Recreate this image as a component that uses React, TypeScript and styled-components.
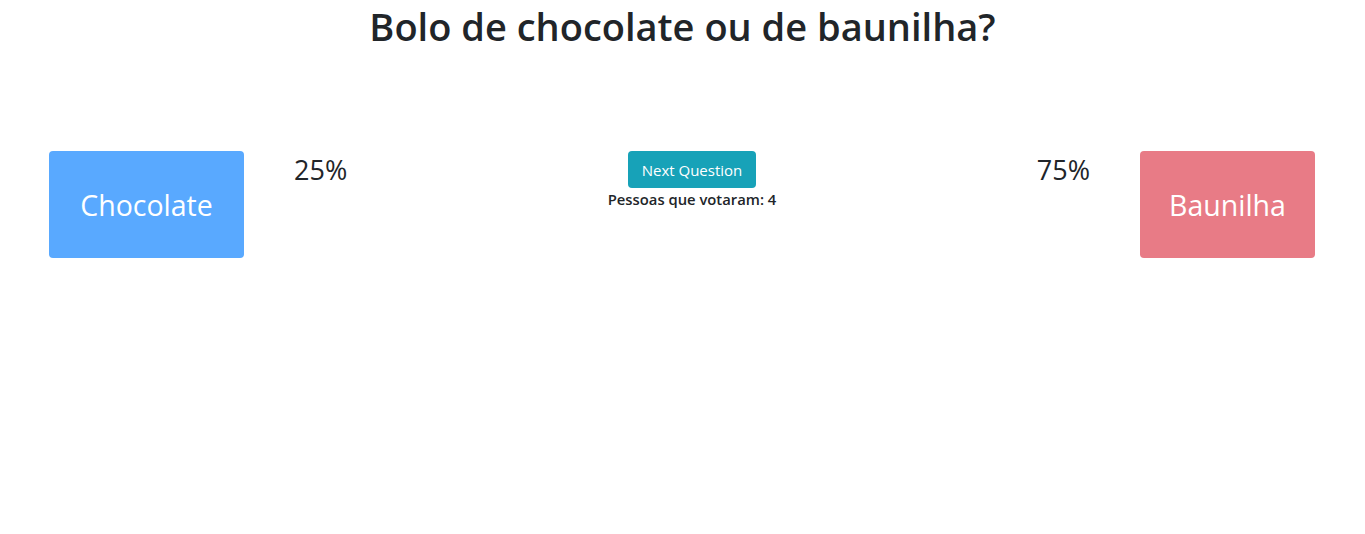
import React from "react";
import styled, { createGlobalStyle } from "styled-components";

const GlobalStyle = createGlobalStyle`
  html, body { margin: 0; padding: 0; background: #fff; }
  body {
    font-family: "Open Sans", "Noto Sans", "Liberation Sans", sans-serif;
    color: #212529;
  }
`;

const Page = styled.div`
  display: flex;
  flex-direction: column;
  align-items: stretch;
`;

const Title = styled.h1`
  margin: 0;
  padding-top: 2px;
  text-align: center;
  font-size: 38px;
  font-weight: 600;
  line-height: 48px;
  color: #212529;
`;

const Row = styled.div`
  display: flex;
  justify-content: space-between;
  align-items: flex-start;
  padding: 0 50px 0 49px;
  margin-top: 101px;
`;

const Side = styled.div`
  display: flex;
  align-items: flex-start;
  gap: 50px;
`;

const Choice = styled.button<{ $tone: "blue" | "red"; $w: number }>`
  width: ${(p) => p.$w}px;
  height: 107px;
  border: none;
  border-radius: 4px;
  font-family: inherit;
  font-size: 28.5px;
  color: #fff;
  background: ${(p) => (p.$tone === "blue" ? "#59a9ff" : "#e87b86")};
  display: flex;
  align-items: center;
  justify-content: center;
  padding: 0;
  cursor: default;
`;

const Percent = styled.div`
  font-size: 27px;
  font-weight: 500;
  line-height: 32px;
  padding-top: 3px;
`;

const Center = styled.div`
  display: flex;
  flex-direction: column;
  align-items: center;
  gap: 1px;
`;

const NextButton = styled.button`
  height: 37px;
  width: 128px;
  border: none;
  border-radius: 4px;
  background: #17a2b8;
  color: #fff;
  font-family: inherit;
  font-size: 15px;
  padding: 0;
  cursor: pointer;
`;

const Voters = styled.div`
  font-size: 14.8px;
  font-weight: 600;
  line-height: 20px;
`;

export default function App() {
  return (
    <>
      <GlobalStyle />
      <Page>
        <Title>Bolo de chocolate ou de baunilha?</Title>
        <Row>
          <Side>
            <Choice $tone="blue" $w={195}>Chocolate</Choice>
            <Percent>25%</Percent>
          </Side>
          <Center>
            <NextButton>Next Question</NextButton>
            <Voters>Pessoas que votaram: 4</Voters>
          </Center>
          <Side>
            <Percent>75%</Percent>
            <Choice $tone="red" $w={175}>Baunilha</Choice>
          </Side>
        </Row>
      </Page>
    </>
  );
}
